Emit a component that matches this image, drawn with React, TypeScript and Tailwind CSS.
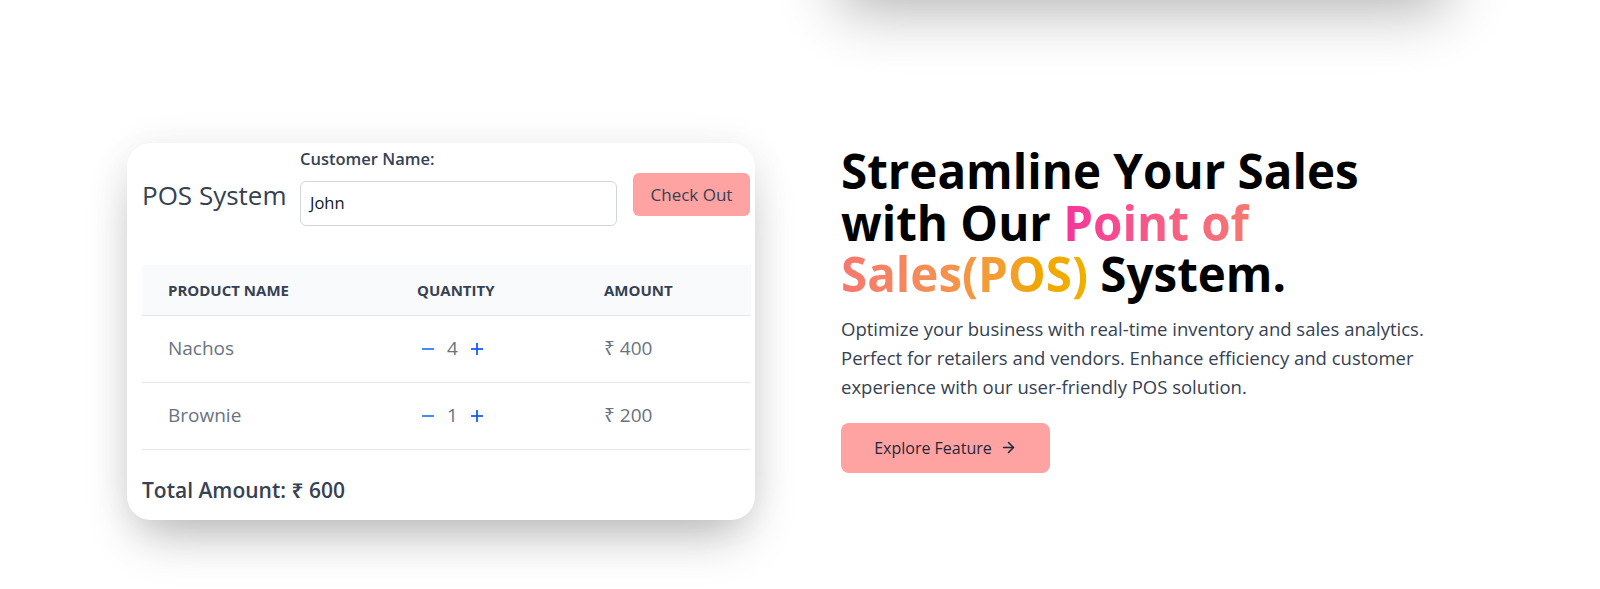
import React from "react";
import { ArrowRight } from "lucide-react";

function MinusIcon() {
  return (
    <svg width="14" height="14" viewBox="0 0 14 14" className="text-blue-500">
      <line x1="1" y1="7" x2="13" y2="7" stroke="currentColor" strokeWidth="1.8" />
    </svg>
  );
}

function PlusIcon() {
  return (
    <svg width="14" height="14" viewBox="0 0 14 14" className="text-blue-600">
      <line x1="1" y1="7" x2="13" y2="7" stroke="currentColor" strokeWidth="1.8" />
      <line x1="7" y1="1" x2="7" y2="13" stroke="currentColor" strokeWidth="1.8" />
    </svg>
  );
}

const rows = [
  { name: "Nachos", qty: 4, amount: "₹ 400" },
  { name: "Brownie", qty: 1, amount: "₹ 200" },
];

export default function App() {
  return (
    <div className="min-h-screen overflow-hidden bg-white font-['Open_Sans','Noto_Sans',sans-serif]">
      <section className="-mt-[300px] flex pl-[829px]">
        <div className="h-[295px] w-[628px] rounded-3xl bg-white shadow-[0_25px_60px_-10px_rgba(0,0,0,0.3)]" />
      </section>

      <section className="mt-[148px] flex items-start gap-[86px] pl-[127px]">
        <div className="w-[628px] rounded-3xl bg-white pb-4 pl-[15px] pr-[4px] pt-[6px] shadow-[0_25px_50px_-12px_rgba(0,0,0,0.28),0_0_40px_rgba(0,0,0,0.06)]">
          <div className="flex items-start gap-4">
            <h2 className="mt-[28px] w-[142px] whitespace-nowrap text-[26px] leading-9 text-gray-700">
              POS System
            </h2>
            <div className="w-[317px]">
              <label className="mb-3 block text-[16.5px] font-semibold leading-5 text-gray-700">
                Customer Name:
              </label>
              <div className="flex h-[45px] items-center rounded-md border border-gray-300 px-[9px] text-[16.5px] text-gray-900">
                John
              </div>
            </div>
            <button className="mt-[24px] h-[43px] w-[117px] rounded-md bg-red-300 text-[17px] text-gray-700">
              Check Out
            </button>
          </div>

          <table className="mt-[39px] w-[609px] border-collapse text-left">
            <thead>
              <tr className="h-[50px] border-b border-gray-200 bg-gray-50">
                <th className="w-[249px] px-[26px] text-[15px] font-bold uppercase text-gray-700">Product Name</th>
                <th className="w-[187px] px-[26px] text-[15px] font-bold uppercase text-gray-700">Quantity</th>
                <th className="px-[26px] text-[15px] font-bold uppercase text-gray-700">Amount</th>
              </tr>
            </thead>
            <tbody>
              {rows.map((r) => (
                <tr key={r.name} className="h-[67px] border-b border-gray-200">
                  <td className="px-[26px] text-[19px] text-gray-500">{r.name}</td>
                  <td className="px-[26px]">
                    <div className="flex items-center gap-[12px] pl-[4px] text-[19px] text-gray-500">
                      <MinusIcon />
                      <span>{r.qty}</span>
                      <PlusIcon />
                    </div>
                  </td>
                  <td className="px-[26px] text-[19px] text-gray-500">{r.amount}</td>
                </tr>
              ))}
            </tbody>
          </table>

          <p className="mt-[26px] text-[21px] font-semibold leading-7 text-gray-700">
            Total Amount: ₹ 600
          </p>
        </div>

        <div className="w-[620px] pt-[2px]">
          <h1 className="text-[47.5px] font-bold leading-[51.5px] text-black">
            Streamline Your Sales
            <br />
            with Our{" "}
            <span className="bg-linear-to-r from-pink-500 to-yellow-500 bg-clip-text text-transparent">
              Point of
              <br />
              Sales(POS)
            </span>{" "}
            System.
          </h1>
          <p className="mt-[14px] text-[18.5px] leading-[29px] text-gray-700">
            Optimize your business with real-time inventory and sales analytics.
            <br />
            Perfect for retailers and vendors. Enhance efficiency and customer
            <br />
            experience with our user-friendly POS solution.
          </p>
          <button className="mt-[22px] flex h-[50px] w-[209px] items-center justify-center gap-2 rounded-lg bg-red-300 text-[16px] font-medium text-gray-800">
            Explore Feature
            <ArrowRight size={17} strokeWidth={2.2} />
          </button>
        </div>
      </section>
    </div>
  );
}
